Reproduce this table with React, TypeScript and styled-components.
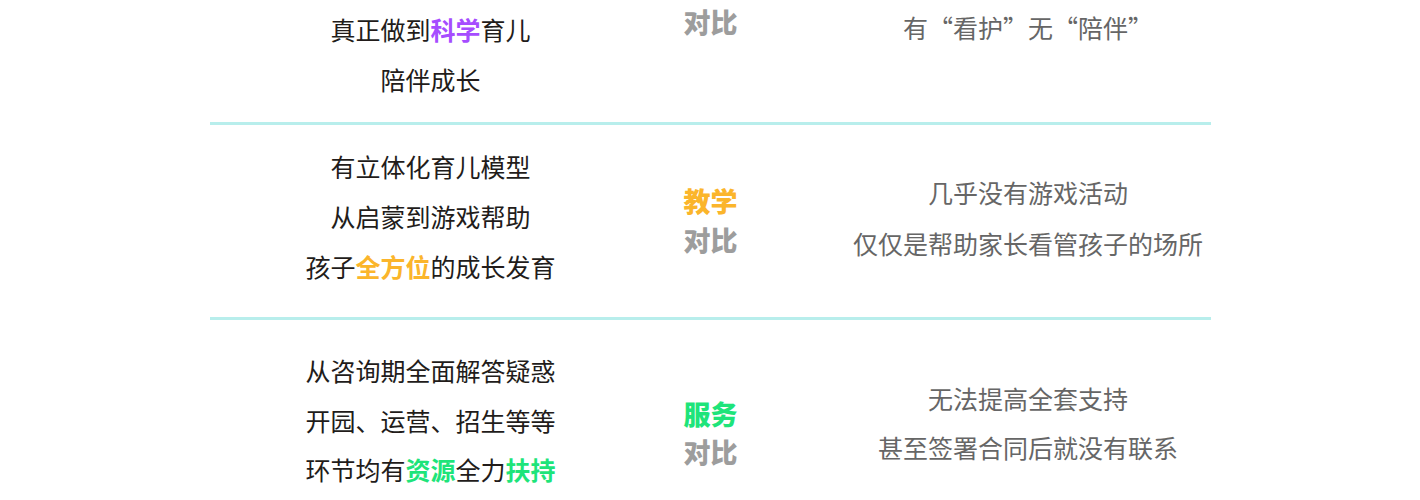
import React from 'react';
import styled, { createGlobalStyle } from 'styled-components';

const Global = createGlobalStyle`
  html, body { margin: 0; padding: 0; background: #ffffff; }
  body {
    font-family: "Noto Sans CJK SC", "Noto Sans", sans-serif;
    overflow: hidden;
  }
`;

const Table = styled.div`
  width: 1001px;
  margin: 0 auto;
  display: flex;
  flex-direction: column;
`;

const Row = styled.div<{ $h: number; $divider?: boolean }>`
  display: grid;
  grid-template-columns: 442px 118px 1fr;
  align-items: start;
  height: ${(p) => p.$h}px;
  border-bottom: ${(p) => (p.$divider ? '3px solid #b8eeec' : 'none')};
`;

const Ours = styled.div<{ $top: number; $lh: number }>`
  margin-top: ${(p) => p.$top}px;
  text-align: center;
  font-size: 25px;
  line-height: ${(p) => p.$lh}px;
  color: #221c1a;
  white-space: nowrap;
`;

const Label = styled.div<{ $top: number; $lh: number }>`
  margin-top: ${(p) => p.$top}px;
  text-align: center;
  font-size: 27px;
  font-weight: 900;
  line-height: ${(p) => p.$lh}px;
  white-space: nowrap;
`;

const LabelLine = styled.div<{ $color: string }>`
  color: ${(p) => p.$color};
`;

const Others = styled.div<{ $top: number; $lh: number }>`
  margin-top: ${(p) => p.$top}px;
  padding-left: 76px;
  text-align: center;
  font-size: 25px;
  line-height: ${(p) => p.$lh}px;
  color: #666666;
  white-space: nowrap;
`;

const Hl = styled.span<{ $color: string }>`
  color: ${(p) => p.$color};
  font-weight: 700;
`;

const GREY = '#9d9d9d';
const PURPLE = '#a64cff';
const ORANGE = '#fbb52b';
const GREEN = '#1ee47a';

type Seg = { t: string; c?: string };

type RowData = {
  h: number;
  divider: boolean;
  leftTop: number;
  leftLh: number;
  left: Seg[][];
  midTop: number;
  midLh: number;
  mid: { t: string; c: string }[];
  rightTop: number;
  rightLh: number;
  right: string[];
};

const rows: RowData[] = [
  {
    h: 122,
    divider: true,
    leftTop: 4,
    leftLh: 50,
    left: [
      [{ t: '真正做到' }, { t: '科学', c: PURPLE }, { t: '育儿' }],
      [{ t: '陪伴成长' }],
    ],
    midTop: 2,
    midLh: 40,
    mid: [{ t: '对比', c: GREY }],
    rightTop: 2,
    rightLh: 50,
    right: ['有“看护”无“陪伴”'],
  },
  {
    h: 192,
    divider: true,
    leftTop: 16,
    leftLh: 50,
    left: [
      [{ t: '有立体化育儿模型' }],
      [{ t: '从启蒙到游戏帮助' }],
      [{ t: '孩子' }, { t: '全方位', c: ORANGE }, { t: '的成长发育' }],
    ],
    midTop: 56,
    midLh: 39,
    mid: [
      { t: '教学', c: ORANGE },
      { t: '对比', c: GREY },
    ],
    rightTop: 42,
    rightLh: 51,
    right: ['几乎没有游戏活动', '仅仅是帮助家长看管孩子的场所'],
  },
  {
    h: 180,
    divider: false,
    leftTop: 26,
    leftLh: 49.5,
    left: [
      [{ t: '从咨询期全面解答疑惑' }],
      [{ t: '开园、运营、招生等等' }],
      [
        { t: '环节均有' },
        { t: '资源', c: GREEN },
        { t: '全力' },
        { t: '扶持', c: GREEN },
      ],
    ],
    midTop: 75,
    midLh: 38,
    mid: [
      { t: '服务', c: GREEN },
      { t: '对比', c: GREY },
    ],
    rightTop: 54,
    rightLh: 49,
    right: ['无法提高全套支持', '甚至签署合同后就没有联系'],
  },
];

export default function App() {
  return (
    <>
      <Global />
      <Table>
        {rows.map((r, i) => (
          <Row key={i} $h={r.h} $divider={r.divider}>
            <Ours $top={r.leftTop} $lh={r.leftLh}>
              {r.left.map((line, j) => (
                <div key={j}>
                  {line.map((s, k) =>
                    s.c ? (
                      <Hl key={k} $color={s.c}>
                        {s.t}
                      </Hl>
                    ) : (
                      <span key={k}>{s.t}</span>
                    )
                  )}
                </div>
              ))}
            </Ours>
            <Label $top={r.midTop} $lh={r.midLh}>
              {r.mid.map((m, j) => (
                <LabelLine key={j} $color={m.c}>
                  {m.t}
                </LabelLine>
              ))}
            </Label>
            <Others $top={r.rightTop} $lh={r.rightLh}>
              {r.right.map((t, j) => (
                <div key={j}>{t}</div>
              ))}
            </Others>
          </Row>
        ))}
      </Table>
    </>
  );
}
